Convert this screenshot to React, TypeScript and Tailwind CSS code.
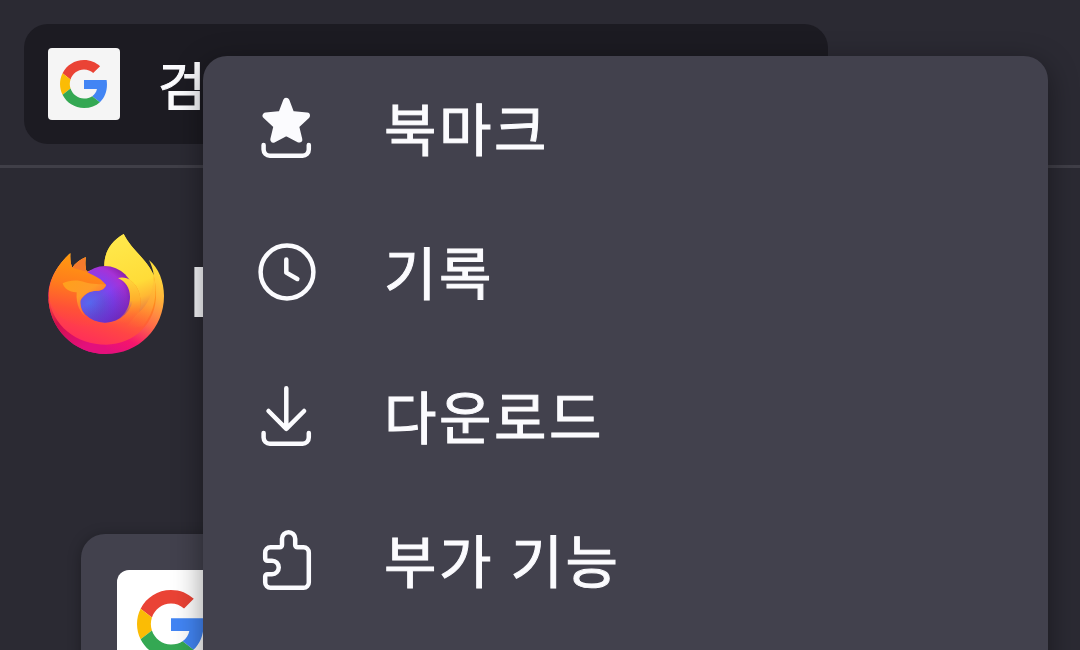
import type { ReactNode } from "react";

function GoogleLogo({ className }: { className: string }) {
  return (
    <svg className={className} viewBox="0 0 48 48" aria-hidden="true">
      <path fill="#EA4335" d="M24 9.5c3.54 0 6.71 1.22 9.21 3.6l6.85-6.85C35.9 2.38 30.47 0 24 0 14.62 0 6.51 5.38 2.56 13.22l7.98 6.19C12.43 13.72 17.74 9.5 24 9.5z" />
      <path fill="#4285F4" d="M46.98 24.55c0-1.57-.15-3.09-.38-4.55H24v9.02h12.94c-.58 2.96-2.26 5.48-4.78 7.18l7.73 6c4.51-4.18 7.09-10.36 7.09-17.65z" />
      <path fill="#FBBC05" d="M10.53 28.59c-.48-1.45-.76-2.99-.76-4.59s.27-3.14.76-4.59l-7.98-6.19C.92 16.46 0 20.12 0 24c0 3.88.92 7.54 2.56 10.78l7.97-6.19z" />
      <path fill="#34A853" d="M24 48c6.48 0 11.93-2.13 15.89-5.81l-7.73-6c-2.15 1.45-4.92 2.3-8.16 2.3-6.26 0-11.57-4.22-13.47-9.91l-7.98 6.19C6.51 42.62 14.62 48 24 48z" />
    </svg>
  );
}

function FirefoxLogo() {
  return (
    <svg className="h-[120px] w-[118px] shrink-0" viewBox="51 42 354 360" aria-hidden="true">
      <defs>
        <linearGradient id="ff-rim" gradientUnits="userSpaceOnUse" x1="375" y1="150" x2="240" y2="395">
          <stop offset="0" stopColor="#ffdc3c" />
          <stop offset="0.25" stopColor="#ffb33a" />
          <stop offset="0.55" stopColor="#ff6a48" />
          <stop offset="0.8" stopColor="#f5156c" />
          <stop offset="1" stopColor="#e3107c" />
        </linearGradient>
        <linearGradient id="ff-body" gradientUnits="userSpaceOnUse" x1="290" y1="120" x2="205" y2="375">
          <stop offset="0" stopColor="#ffb01c" />
          <stop offset="0.35" stopColor="#ff8c1c" />
          <stop offset="0.55" stopColor="#ff6a30" />
          <stop offset="0.78" stopColor="#ff4545" />
          <stop offset="1" stopColor="#ff3058" />
        </linearGradient>
        <linearGradient id="ff-head" gradientUnits="userSpaceOnUse" x1="150" y1="110" x2="110" y2="320">
          <stop offset="0" stopColor="#ff9a10" />
          <stop offset="0.4" stopColor="#ff7c1c" />
          <stop offset="0.75" stopColor="#ff5038" />
          <stop offset="1" stopColor="#ff4045" stopOpacity="0" />
        </linearGradient>
        <linearGradient id="ff-flame" gradientUnits="userSpaceOnUse" x1="270" y1="60" x2="345" y2="275">
          <stop offset="0" stopColor="#ffe84a" />
          <stop offset="0.6" stopColor="#ffdc38" />
          <stop offset="0.8" stopColor="#ffb834" />
          <stop offset="1" stopColor="#e87840" />
        </linearGradient>
        <linearGradient id="ff-edge" gradientUnits="userSpaceOnUse" x1="370" y1="170" x2="320" y2="330">
          <stop offset="0" stopColor="#ffd038" />
          <stop offset="0.5" stopColor="#ffa234" />
          <stop offset="1" stopColor="#ff6a38" stopOpacity="0" />
        </linearGradient>
        <linearGradient id="ff-wisp" gradientUnits="userSpaceOnUse" x1="290" y1="175" x2="300" y2="310">
          <stop offset="0" stopColor="#ffd83a" />
          <stop offset="0.5" stopColor="#ffae2c" />
          <stop offset="1" stopColor="#ff6a38" stopOpacity="0" />
        </linearGradient>
        <linearGradient id="ff-cheek" gradientUnits="userSpaceOnUse" x1="100" y1="185" x2="170" y2="290">
          <stop offset="0" stopColor="#ffa01c" />
          <stop offset="0.5" stopColor="#ff9c28" />
          <stop offset="1" stopColor="#ff5c3a" />
        </linearGradient>
        <linearGradient id="ff-left" gradientUnits="userSpaceOnUse" x1="60" y1="240" x2="150" y2="390">
          <stop offset="0" stopColor="#ff4a3a" />
          <stop offset="0.4" stopColor="#d0104c" />
          <stop offset="1" stopColor="#e3107c" />
        </linearGradient>
        <radialGradient id="ff-globe" gradientUnits="userSpaceOnUse" cx="178" cy="250" r="140">
          <stop offset="0" stopColor="#5668ee" />
          <stop offset="0.3" stopColor="#6a52e4" />
          <stop offset="0.52" stopColor="#8440f0" />
          <stop offset="0.8" stopColor="#a632d6" />
          <stop offset="1" stopColor="#8a1fa8" />
        </radialGradient>
        <linearGradient id="ff-globe-shade" gradientUnits="userSpaceOnUse" x1="215" y1="225" x2="262" y2="300">
          <stop offset="0" stopColor="#4a1fa0" stopOpacity="0" />
          <stop offset="1" stopColor="#4a1fa0" stopOpacity="0.55" />
        </linearGradient>
      </defs>
      <path
        fill="url(#ff-rim)"
        d="M121 100C90 128 55 172 55 228C55 325 132 402 228 402C326 402 402 325 402 228C402 186 386 143 357 120C365 137 370 151 371 166C352 119 300 85 281 42C238 66 222 104 223 140L170 155C165 142 165 127 167 112C150 119 136 130 127 143C121 130 120 115 121 100Z"
      />
      <path fill="url(#ff-left)" d="M55 228C55 325 132 402 228 402V370L58 245Z" />
      <path
        fill="url(#ff-body)"
        d="M121 100C88 129 57 172 56 228C65 318 140 374 228 374C318 372 382 306 378 215C377 195 374 178 371 166C340 150 260 145 223 140L170 155C165 142 165 127 167 112C150 119 136 130 127 143C121 130 120 115 121 100Z"
      />
      <path fill="url(#ff-edge)" d="M371 166C384 220 374 275 340 318L280 330L327 276C352 254 367 220 371 166Z" />
      <path
        fill="url(#ff-flame)"
        d="M281 42C238 66 222 104 223 140L264 174L303 182C330 203 338 240 327 276C352 258 372 216 371 166C352 119 305 90 281 42Z"
      />
      <circle cx="225" cy="223" r="85" fill="url(#ff-globe)" />
      <circle cx="225" cy="223" r="85" fill="url(#ff-globe-shade)" />
      <path
        fill="url(#ff-wisp)"
        d="M264 174C277 170 292 173 303 182C330 203 338 240 327 276C320 296 302 308 280 311C260 318 242 312 238 307C272 302 300 270 300 230C300 203 286 184 264 174Z"
      />
      {/* fox head over the globe */}
      <path
        fill="url(#ff-head)"
        d="M121 100C120 118 121 130 127 143C136 130 150 119 167 112C165 127 165 142 170 155C184 164 199 168 213 179L228 194C226 204 216 212 200 212C178 212 160 224 151 242C147 275 180 304 205 306C170 330 90 320 58 240C50 190 85 130 121 100Z"
      />
      <path fill="#f47a2c" d="M167 112C150 119 136 130 127 143L170 155C165 142 165 127 167 112Z" />
      <path
        fill="url(#ff-cheek)"
        d="M98 190C122 179 145 180 165 187C188 194 211 192 228 194C226 204 216 212 200 212C178 212 160 224 151 242C150 264 160 284 174 294C152 283 137 255 140 217C121 218 103 207 98 190Z"
      />
    </svg>
  );
}

function MenuIcon({ children }: { children: ReactNode }) {
  return (
    <svg
      className="h-[72px] w-[72px] shrink-0"
      viewBox="0 0 72 72"
      fill="none"
      stroke="currentColor"
      strokeWidth="4.5"
      strokeLinecap="round"
      strokeLinejoin="round"
      aria-hidden="true"
    >
      {children}
    </svg>
  );
}

const TRAY = "M12.6 53v4.6a6.2 6.2 0 0 0 6.2 6.2h32.8a6.2 6.2 0 0 0 6.2-6.2V53";

const items = [
  {
    label: "북마크",
    icon: (
      <>
        <path
          fill="currentColor"
          strokeWidth="6.4"
          d="M35.3 9L40.4 22.3L55.8 23.6L44.8 33.8L48.1 47.4L35.3 40.6L22.5 47.4L25.8 33.8L14.8 23.6L30.2 22.3Z"
        />
        <path d={TRAY} />
      </>
    ),
  },
  {
    label: "기록",
    icon: (
      <>
        <circle cx="36" cy="36" r="26.4" />
        <path d="M35.3 23.6V36.6L46.3 43" />
      </>
    ),
  },
  {
    label: "다운로드",
    icon: (
      <>
        <path d="M35.3 8.2V48.8M17.5 31L35.3 48.8L53.1 31" />
        <path d={TRAY} />
      </>
    ),
  },
  {
    label: "부가 기능",
    icon: (
      <path d="M19.4 23.2H28.8A2.2 2.2 0 0 0 31 21V14.8A6.6 6.6 0 0 1 44.2 14.8V21A2.2 2.2 0 0 0 46.4 23.2H52.6A5.2 5.2 0 0 1 57.8 28.4V58.6A5.2 5.2 0 0 1 52.6 63.8H19.4A5.2 5.2 0 0 1 14.2 58.6V52.4A2.2 2.2 0 0 1 16.4 50.2H21A6.75 6.75 0 0 0 21 36.7H16.4A2.2 2.2 0 0 1 14.2 34.5V28.4A5.2 5.2 0 0 1 19.4 23.2Z" />
    ),
  },
];

export default function App() {
  return (
    <div className="relative h-[650px] w-[1080px] overflow-hidden bg-[#2b2a33] font-['Noto_Sans_CJK_KR',sans-serif] text-[#fbfbfe]">
      <header className="h-[168px] border-b-[3px] border-[#403f48] px-6 pt-6">
        <div className="flex h-[120px] w-[804px] items-center gap-[38px] rounded-[24px] bg-[#1c1b22] px-6">
          <div className="flex h-[72px] w-[72px] items-center justify-center rounded-[4px] bg-[#f5f5f5]">
            <GoogleLogo className="h-12 w-12" />
          </div>
          <span className="text-[52px] leading-none [-webkit-text-stroke:1px_currentColor]">검</span>
        </div>
      </header>

      <main>
        <div className="flex h-[186px] items-end gap-[25px] pl-[47px]">
          <FirefoxLogo />
          <span className="pb-[26px] font-['Roboto',sans-serif] text-[70px] leading-[70px] font-bold">F</span>
        </div>
        <div className="mt-[180px] ml-[81px] h-[240px] w-[240px] rounded-[24px] bg-[#42414d] p-9 shadow-[0_2px_14px_rgba(0,0,0,0.3)]">
          <div className="flex h-[108px] w-[108px] items-center justify-center rounded-[12px] bg-white">
            <GoogleLogo className="h-[68px] w-[68px]" />
          </div>
        </div>
      </main>

      <nav className="absolute top-14 left-[203px] h-[700px] w-[845px] rounded-[24px] bg-[#42414d] shadow-[0_8px_30px_rgba(0,0,0,0.42)]">
        <ul>
          {items.map((item) => (
            <li key={item.label} className="flex h-36 items-center gap-[61px] pl-12">
              <MenuIcon>{item.icon}</MenuIcon>
              <span className="pb-[3px] text-[57px] leading-none tracking-[2.6px] [word-spacing:1px] [-webkit-text-stroke:1px_currentColor]">
                {item.label}
              </span>
            </li>
          ))}
        </ul>
      </nav>
    </div>
  );
}
